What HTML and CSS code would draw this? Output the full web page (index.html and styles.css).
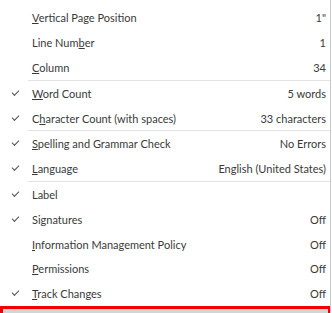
FILE: index.html
```html
<!DOCTYPE html>
<html>
	<head>
		<meta charset="utf-8">
		<title>Customize Status Bar</title>
		<link rel="stylesheet" href="styles.css">
	</head>
	<body>
		<div class="menu">
			<div class="row"><span class="check"></span><span class="label"><u>V</u>ertical Page Position</span><span class="value">1"</span></div>
			<div class="row"><span class="check"></span><span class="label">Line Num<u>b</u>er</span><span class="value">1</span></div>
			<div class="row"><span class="check"></span><span class="label"><u>C</u>olumn</span><span class="value">34</span></div>
			<div class="sep"></div>
			<div class="row on"><span class="check"></span><span class="label"><u>W</u>ord Count</span><span class="value">5 words</span></div>
			<div class="row on"><span class="check"></span><span class="label">C<u>h</u>aracter Count (with spaces)</span><span class="value">33 characters</span></div>
			<div class="sep"></div>
			<div class="row on"><span class="check"></span><span class="label"><u>S</u>pelling and Grammar Check</span><span class="value">No Errors</span></div>
			<div class="row on"><span class="check"></span><span class="label"><u>L</u>anguage</span><span class="value">English (United States)</span></div>
			<div class="sep"></div>
			<div class="row on"><span class="check"></span><span class="label">Label</span><span class="value"></span></div>
			<div class="row on"><span class="check"></span><span class="label">Signatures</span><span class="value">Off</span></div>
			<div class="row"><span class="check"></span><span class="label"><u>I</u>nformation Management Policy</span><span class="value">Off</span></div>
			<div class="row"><span class="check"></span><span class="label"><u>P</u>ermissions</span><span class="value">Off</span></div>
			<div class="row on"><span class="check"></span><span class="label"><u>T</u>rack Changes</span><span class="value">Off</span></div>
			<div class="highlight"></div>
		</div>
	</body>
</html>
```
FILE: styles.css
```css
html, body{
	margin: 0;
	padding: 0;
	overflow: hidden;
	background: #fff;
}
.menu{
	width: 331px;
	height: 313px;
	padding-top: 5.5px;
	box-sizing: border-box;
	border-right: 1px solid #c6c6c6;
	font-family: Lato, "Open Sans", sans-serif;
	font-size: 11px;
	color: #3a3a3a;
}
.row{
	display: flex;
	align-items: center;
	height: 24.8px;
}
.check{
	width: 32px;
	flex: none;
	display: flex;
	justify-content: center;
	padding-right: 2px;
	box-sizing: border-box;
}
.row.on .check::before{  /* 勾选标记 */
	content: "";
	width: 6px;
	height: 3px;
	border-left: 1.3px solid #505050;
	border-bottom: 1.3px solid #505050;
	transform: rotate(-45deg);
	margin-top: -3px;
}
.label{
	flex: 1;
	white-space: nowrap;
}
.label u{
	text-decoration-thickness: 1px;
	text-underline-offset: 1px;
}
.value{
	padding-right: 4px;
	white-space: nowrap;
}
.sep{
	height: 1px;
	margin-left: 28px;
	background: #e3e3e3;
}
.highlight{  /* 红框选中项 */
	height: 24px;
	border: 3px solid #f00000;
	border-right-width: 2px;
	background: #d4d4d4;
}
```
